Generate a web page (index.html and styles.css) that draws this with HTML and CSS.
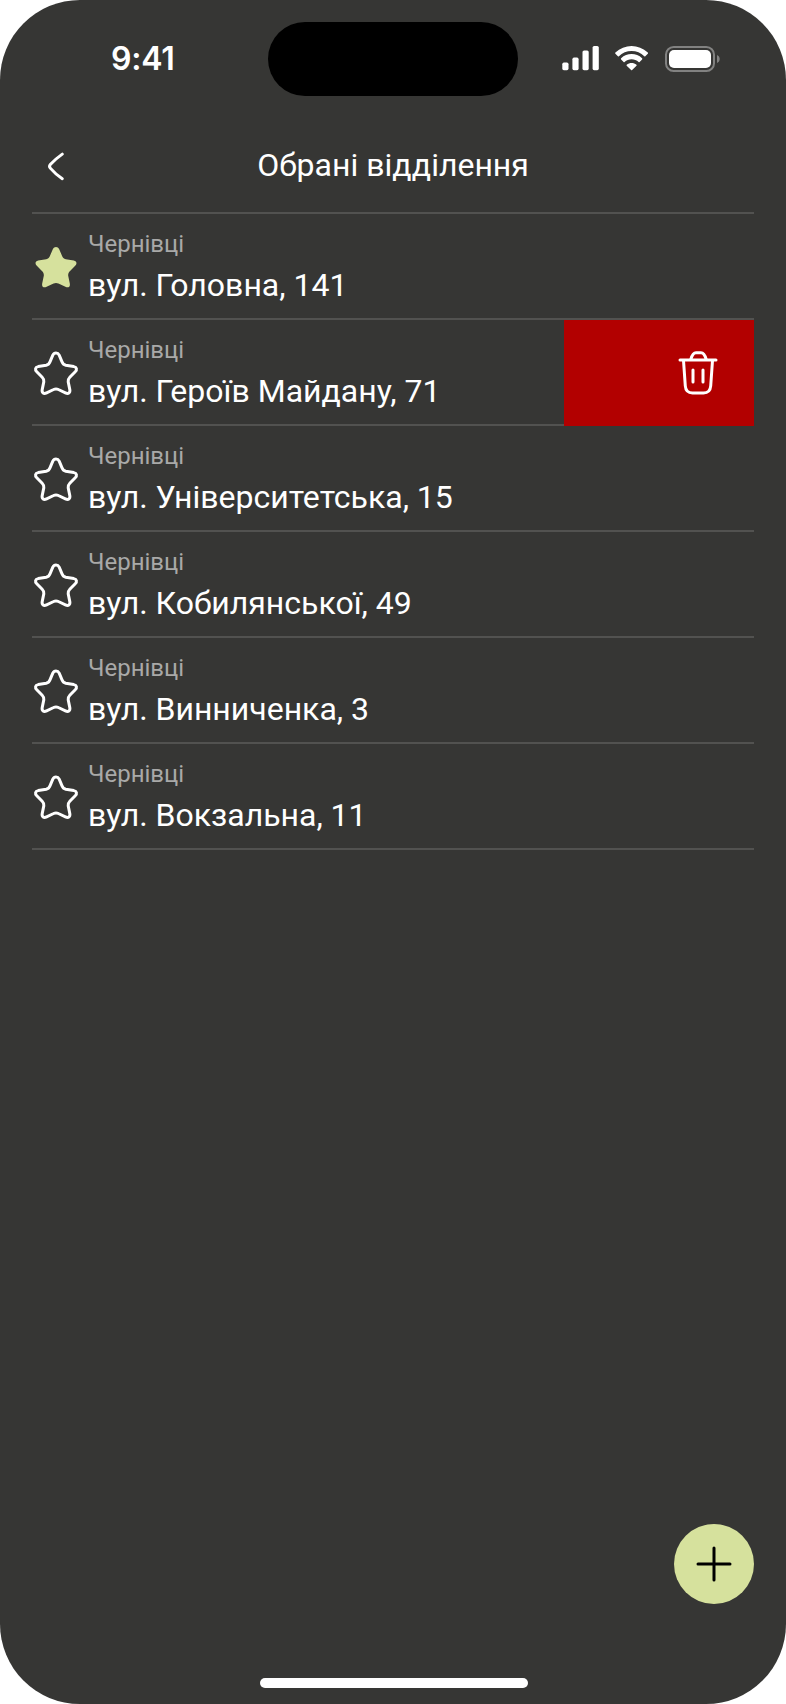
FILE: index.html
```html
<!doctype html>
<html lang="uk">
<head>
    <meta charset="UTF-8">
    <meta name="viewport" content="width=device-width, initial-scale=1.0">
    <title>Обрані відділення</title>
    <link rel="stylesheet" href="styles.css">
</head>
<body>
    <svg class="sprite">
        <symbol id="star" viewBox="0 -0.6 48 48">
            <path d="M20.8 6.6C22.2 3.8 25.8 3.8 27.2 6.6L30 13.2C30.6 15 31.8 16.2 33.8 16.7L41.8 18C44.8 18.6 45.3 21 43.2 23.2L37.8 28.6C36.6 29.8 36 31.4 36.2 33.2L37.8 41C38.4 44.4 36.2 45.6 33.4 44.2L26.4 40.9C24.8 40.1 23.2 40.1 21.6 40.9L14.6 44.2C11.8 45.6 9.6 44.4 10.2 41L11.8 33.2C12 31.4 11.4 29.8 10.2 28.6L4.8 23.2C2.7 21 3.2 18.6 6.2 18L14.2 16.7C16.2 16.2 17.4 15 18 13.2Z"/>
        </symbol>
    </svg>
    <div class="phone">
        <div class="status-bar">
            <div class="time">9:41</div>
            <div class="island"></div>
            <div class="indicators">
                <svg class="signal" width="38" height="26" viewBox="0 0 38 26">
                    <rect x="0.3" y="16.6" width="6.2" height="7.6" rx="1.6"/>
                    <rect x="10.4" y="11.6" width="6.2" height="12.6" rx="1.6"/>
                    <rect x="20.5" y="4.4" width="6.2" height="19.8" rx="1.6"/>
                    <rect x="30.6" y="0" width="6.2" height="24.2" rx="1.6"/>
                </svg>
                <svg class="wifi" width="36" height="26" viewBox="0 0 36 26">
                    <path d="M17.6 5.1C22.4 5.1 26.9 6.9 30.3 10.2C30.6 10.5 31 10.5 31.3 10.2L33.8 7.7C34.1 7.4 34.1 6.9 33.8 6.6C24.7-2.1 10.4-2.1 1.4 6.6C1.1 6.9 1.1 7.4 1.4 7.7L3.9 10.2C4.2 10.5 4.6 10.5 4.9 10.2C8.3 6.9 12.8 5.1 17.6 5.1Z"/>
                    <path d="M17.6 13.2C20.2 13.2 22.7 14.2 24.6 15.9C24.9 16.2 25.3 16.2 25.6 15.9L28.1 13.4C28.4 13.1 28.4 12.6 28.1 12.3C22.2 6.7 13 6.7 7.1 12.3C6.8 12.6 6.8 13.1 7.1 13.4L9.6 15.9C9.9 16.2 10.3 16.2 10.6 15.9C12.5 14.2 15 13.2 17.6 13.2Z"/>
                    <path d="M22.5 18.7C22.8 19 22.8 19.4 22.5 19.7L18.1 24C17.8 24.3 17.4 24.3 17.1 24L12.7 19.7C12.4 19.4 12.4 19 12.7 18.7C15.5 16.3 19.7 16.3 22.5 18.7Z"/>
                </svg>
                <svg class="battery" width="56" height="26" viewBox="0 0 56 26">
                    <rect class="battery-case" x="1" y="1" width="48" height="24" rx="7.6"/>
                    <rect x="4" y="4" width="42" height="18" rx="5"/>
                    <path class="battery-cap" d="M52 9V17C53.7 16.3 54.7 14.8 54.7 13S53.7 9.7 52 9Z"/>
                </svg>
            </div>
        </div>

        <div class="header">
            <a href="#" class="back">
                <svg width="48" height="48" viewBox="0 -1 48 48">
                    <path d="M30.3 12.1C24.8 16 21 19.5 18.3 22.5C17.3 23.7 17.3 24.9 18.3 26.1C21 29.3 24.8 33 30.3 36.7"/>
                </svg>
            </a>
            <h1 class="title">Обрані відділення</h1>
        </div>

        <ul class="branches">
            <li class="branch">
                <svg class="star star-active"><use href="#star"/></svg>
                <div class="info">
                    <p class="city">Чернівці</p>
                    <p class="street">вул. Головна, 141</p>
                </div>
            </li>
            <li class="branch">
                <svg class="star"><use href="#star"/></svg>
                <div class="info">
                    <p class="city">Чернівці</p>
                    <p class="street">вул. Героїв Майдану, 71</p>
                </div>
                <a href="#" class="delete">
                    <svg width="48" height="48" viewBox="0 0 48 48">
                        <path d="M6 11H42"/>
                        <path d="M16.8 10.5C17.8 6.8 18.8 3.8 22 3.8H27C30.2 3.8 31.2 6.8 32.2 10.5"/>
                        <path d="M9.5 11.5L11.3 37C11.7 42 14.3 44 18.5 44H29.5C33.7 44 36.3 42 36.7 37L38.5 11.5"/>
                        <path d="M19 21V33M29 21V33"/>
                    </svg>
                </a>
            </li>
            <li class="branch">
                <svg class="star"><use href="#star"/></svg>
                <div class="info">
                    <p class="city">Чернівці</p>
                    <p class="street">вул. Університетська, 15</p>
                </div>
            </li>
            <li class="branch">
                <svg class="star"><use href="#star"/></svg>
                <div class="info">
                    <p class="city">Чернівці</p>
                    <p class="street">вул. Кобилянської, 49</p>
                </div>
            </li>
            <li class="branch">
                <svg class="star"><use href="#star"/></svg>
                <div class="info">
                    <p class="city">Чернівці</p>
                    <p class="street">вул. Винниченка, 3</p>
                </div>
            </li>
            <li class="branch">
                <svg class="star"><use href="#star"/></svg>
                <div class="info">
                    <p class="city">Чернівці</p>
                    <p class="street">вул. Вокзальна, 11</p>
                </div>
            </li>
        </ul>

        <div class="footer">
            <a href="#" class="add">
                <svg width="48" height="48" viewBox="0 0 48 48">
                    <path d="M24 8V40M8 24H40"/>
                </svg>
            </a>
            <div class="home-indicator"></div>
        </div>
    </div>
</body>
</html>
```
FILE: styles.css
```css
*{
    margin: 0;
    padding: 0;
    box-sizing: border-box;
}
body{
    background: #ffffff;
    font-family: Roboto, sans-serif;
    color: #ffffff;
}
ul{
    list-style: none;
}
a{
    text-decoration: none;
}
svg{
    display: block;
}
.sprite{
    display: none;
}

.phone{
    width: 786px;
    height: 1704px;
    border-radius: 80px;
    background: #363634;
    display: flex;
    flex-direction: column;
    overflow: hidden;
}

/* status bar */
.status-bar{
    height: 118px;
    padding-top: 22px;
    display: grid;
    grid-template-columns: 268px 250px 268px;
}
.time{
    padding: 18px 0 0 111px;
    font-family: Inter, sans-serif;
    font-size: 32px;
    font-weight: 600;
    line-height: 38px;
    letter-spacing: -0.2px;
}
.island{
    height: 74px;
    border-radius: 37px;
    background: #000000;
}
.indicators{
    display: flex;
    padding: 24px 0 0 44px;
    fill: #ffffff;
}
.wifi{
    margin-left: 14px;
}
.battery{
    margin-left: 14.5px;
}
.battery-case{
    fill: none;
    stroke: #828281;
    stroke-width: 2;
}
.battery-cap{
    fill: #828281;
}

/* header */
.header{
    height: 94px;
    padding: 0 32px;
    display: grid;
    grid-template-columns: 48px 1fr 48px;
    align-items: center;
}
.back svg{
    fill: none;
    stroke: #ffffff;
    stroke-width: 3;
    stroke-linecap: round;
}
.title{
    font-size: 32px;
    font-weight: 400;
    line-height: 38px;
    text-align: center;
}

/* list */
.branches{
    margin: 0 32px;
    border-top: 2px solid #525250;
}
.branch{
    height: 106px;
    border-bottom: 2px solid #525250;
    display: flex;
    align-items: center;
}
.star{
    width: 48px;
    height: 48px;
    fill: none;
    stroke: #ffffff;
    stroke-width: 3;
}
.star-active{
    fill: #d6e19d;
    stroke: none;
}
.info{
    flex: 1;
    padding: 2px 0 0 8px;
}
.city{
    font-size: 24px;
    line-height: 28px;
    color: #a9a9a8;
    margin-bottom: 8px;
}
.street{
    font-size: 32px;
    line-height: 38px;
}
.delete{
    width: 190px;
    height: 106px;
    margin-bottom: -2px;
    padding-right: 32px;
    background: #b20000;
    display: flex;
    align-items: center;
    justify-content: flex-end;
}
.delete svg{
    fill: none;
    stroke: #ffffff;
    stroke-width: 3;
    stroke-linecap: round;
}

/* bottom */
.footer{
    margin-top: auto;
    padding: 0 32px 16px;
    display: flex;
    flex-direction: column;
}
.add{
    align-self: flex-end;
    width: 80px;
    height: 80px;
    border-radius: 50%;
    background: #d6e19d;
    display: flex;
    align-items: center;
    justify-content: center;
}
.add svg{
    stroke: #000000;
    stroke-width: 3;
    stroke-linecap: round;
}
.home-indicator{
    align-self: center;
    width: 268px;
    height: 10px;
    margin: 74px 0 0 2px;
    border-radius: 5px;
    background: #ffffff;
}
```
